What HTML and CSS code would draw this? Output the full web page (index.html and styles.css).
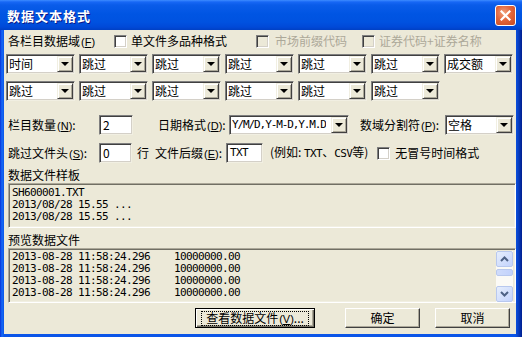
FILE: index.html
```html
<!DOCTYPE html>
<html lang="zh-CN">
<head>
    <meta charset="UTF-8">
    <title>数据文本格式</title>
    <link rel="stylesheet" href="styles.css">
</head>
<body>
    <div class="window">
        <div class="titlebar">
            <span class="title">数据文本格式</span>
            <span class="close">
                <svg width="11" height="11" viewBox="0 0 11 11"><path d="M1.5 1.5 L9.5 9.5 M9.5 1.5 L1.5 9.5" stroke="#fff" stroke-width="2.2" stroke-linecap="square"/></svg>
            </span>
        </div>

        <div class="dialog">
            <div class="row row-top">
                <span class="label t1">各栏目数据域<span class="acc">(<u>F</u>)</span></span>
                <span class="check"></span><span class="label t2">单文件多品种格式</span>
                <span class="check disabled"></span><span class="label gray t3">市场前缀代码</span>
                <span class="check disabled"></span><span class="label gray t4">证券代码+证券名称</span>
            </div>

            <div class="combo-grid">
                <div class="combo"><span class="value">时间</span><span class="drop"></span></div>
                <div class="combo"><span class="value">跳过</span><span class="drop"></span></div>
                <div class="combo"><span class="value">跳过</span><span class="drop"></span></div>
                <div class="combo"><span class="value">跳过</span><span class="drop"></span></div>
                <div class="combo"><span class="value">跳过</span><span class="drop"></span></div>
                <div class="combo"><span class="value">跳过</span><span class="drop"></span></div>
                <div class="combo"><span class="value">成交额</span><span class="drop"></span></div>
                <div class="combo"><span class="value">跳过</span><span class="drop"></span></div>
                <div class="combo"><span class="value">跳过</span><span class="drop"></span></div>
                <div class="combo"><span class="value">跳过</span><span class="drop"></span></div>
                <div class="combo"><span class="value">跳过</span><span class="drop"></span></div>
                <div class="combo"><span class="value">跳过</span><span class="drop"></span></div>
                <div class="combo"><span class="value">跳过</span><span class="drop"></span></div>
            </div>

            <div class="row row-n">
                <span class="label w-first">栏目数量<span class="acc">(<u>N</u>)</span>:</span>
                <span class="edit w-num">2</span>
                <span class="label w-mid m-date">日期格式<span class="acc">(<u>D</u>)</span>:</span>
                <div class="combo date"><span class="value mono">Y/M/D,Y-M-D,Y.M.D</span><span class="drop"></span></div>
                <span class="label w-sep">数域分割符<span class="acc">(<u>P</u>)</span>:</span>
                <div class="combo"><span class="value">空格</span><span class="drop"></span></div>
            </div>

            <div class="row row-s">
                <span class="label w-first">跳过文件头<span class="acc">(<u>S</u>)</span>:</span>
                <span class="edit w-num2">0</span>
                <span class="label m-row">行</span>
                <span class="label w-mid m-ext">文件后缀<span class="acc">(<u>E</u>)</span>:</span>
                <span class="edit mono w-ext">TXT</span>
                <span class="label m-eg">(例如: <span class="mono">TXT</span>、<span class="mono">CSV</span>等)</span>
                <span class="check c4"></span><span class="label">无冒号时间格式</span>
            </div>

            <div class="caption">数据文件样板</div>
            <div class="box sample">
                <div class="line">SH600001.TXT</div>
                <div class="line">2013/08/28 15.55 ...</div>
                <div class="line">2013/08/28 15.55 ...</div>
            </div>

            <div class="caption">预览数据文件</div>
            <div class="box preview">
                <div class="lines">
                    <div class="line">2013-08-28 11:58:24.296    10000000.00</div>
                    <div class="line">2013-08-28 11:58:24.296    10000000.00</div>
                    <div class="line">2013-08-28 11:58:24.296    10000000.00</div>
                    <div class="line">2013-08-28 11:58:24.296    10000000.00</div>
                </div>
                <div class="scrollbar">
                    <span class="sb-btn">
                        <svg width="9" height="6" viewBox="0 0 9 6"><path d="M1 5 L4.5 1.5 L8 5" fill="none" stroke="#4d6185" stroke-width="2"/></svg>
                    </span>
                    <span class="sb-thumb"></span>
                    <span class="sb-btn sb-down">
                        <svg width="9" height="6" viewBox="0 0 9 6"><path d="M1 1 L4.5 4.5 L8 1" fill="none" stroke="#4d6185" stroke-width="2"/></svg>
                    </span>
                </div>
            </div>

            <div class="buttons">
                <span class="btn default"><span class="focus">查看数据文件<span class="acc">(<u>V</u>)</span>...</span></span>
                <span class="btn b-ok">确定</span>
                <span class="btn b-cancel">取消</span>
            </div>
        </div>
    </div>
</body>
</html>
```

FILE: styles.css
```css
* {
    margin: 0;
    padding: 0;
    box-sizing: border-box;
}

body {
    width: 522px;
    height: 337px;
    overflow: hidden;
    font-family: "Noto Sans CJK SC", "Liberation Sans", sans-serif;
    font-size: 12px;
    color: #000;
    background: #0a4fe0;
}

.window {
    width: 522px;
    height: 337px;
    display: flex;
    flex-direction: column;
    background: linear-gradient(to right, #0831d9 0, #166af6 2px, #0a55e8 4px, #0a55e8 515px, #0842c8 518px, #001e8e 522px);
}

/* title bar */
.titlebar {
    height: 30px;
    flex: none;
    display: flex;
    align-items: center;
    justify-content: space-between;
    padding: 0 6px 0 7px;
    background: linear-gradient(to bottom, #3d8cff 0, #1767f5 2px, #0a5ce9 5px, #0055e3 14px, #0052e0 22px, #0049d8 27px, #0040c4 30px);
}

.title {
    color: #fff;
    font-weight: bold;
    font-size: 13px;
    letter-spacing: 1px;
    text-shadow: 1px 1px 0 #0a1c8a;
}

.close {
    width: 21px;
    height: 21px;
    display: flex;
    align-items: center;
    justify-content: center;
    border: 1px solid #fff;
    border-radius: 3px;
    background: radial-gradient(circle at 40% 35%, #f0a07c 0, #e2663c 45%, #c84a20 100%);
    margin-top: 1px;
}

/* dialog body */
.dialog {
    flex: 1;
    margin: 0 6px 3px 4px;
    background: #ece9d8;
    padding: 3px 0 0 2px;
}

.row {
    display: flex;
    align-items: center;
    white-space: nowrap;
}

.row-top {
    height: 16px;
}

.label {
    margin-left: 2px;
    line-height: 16px;
}

.t1 { width: 106px; }
.t2 { width: 125px; margin-left: 4px; }
.t3 { width: 87px; margin-left: 6px; }
.t4 { margin-left: 4px; }

.acc {
    font-family: "Liberation Sans", sans-serif;
    font-size: 11px;
    margin-left: 1px;
}

.gray {
    color: #aca899;
}

.check {
    width: 13px;
    height: 13px;
    flex: none;
    background: #fff;
    border-top: 1px solid #808080;
    border-left: 1px solid #808080;
    border-right: 1px solid #fff;
    border-bottom: 1px solid #fff;
    box-shadow: inset 1px 1px 0 #404040, inset -1px -1px 0 #d4d0c8;
}

.check.disabled {
    background: #ece9d8;
}

.c4 { margin-left: 9px; margin-right: 3px; }

/* combo boxes */
.combo-grid {
    display: grid;
    grid-template-columns: repeat(7, 69px);
    column-gap: 4px;
    row-gap: 7px;
    margin-top: 5px;
}

.combo {
    width: 69px;
    height: 20px;
    flex: none;
    display: flex;
    align-items: center;
    justify-content: space-between;
    background: #fff;
    border-top: 1px solid #7f7f7f;
    border-left: 1px solid #7f7f7f;
    border-right: 1px solid #f1efe2;
    border-bottom: 1px solid #f1efe2;
    box-shadow: inset 1px 1px 0 #404040, inset -1px -1px 0 #d4d0c8;
    padding: 1px 1px 1px 2px;
}

.value {
    line-height: 16px;
    overflow: hidden;
}

.drop {
    width: 16px;
    height: 16px;
    flex: none;
    position: relative;
    background: #ece9d8;
    border-top: 1px solid #f1efe2;
    border-left: 1px solid #f1efe2;
    border-right: 1px solid #404040;
    border-bottom: 1px solid #404040;
    box-shadow: inset 1px 1px 0 #fff, inset -1px -1px 0 #aca899;
}

.drop::after {
    content: "";
    position: absolute;
    left: 3px;
    top: 5px;
    border-left: 4px solid transparent;
    border-right: 4px solid transparent;
    border-top: 4px solid #000;
}

.mono {
    font-family: "DejaVu Sans Mono", "Liberation Mono", monospace;
    font-size: 11px;
    letter-spacing: -0.62px;
}

.combo.date {
    width: 120px;
}

.combo.date .value {
    letter-spacing: -1.1px;
}

/* edits */
.edit {
    height: 20px;
    flex: none;
    background: #fff;
    border-top: 1px solid #7f7f7f;
    border-left: 1px solid #7f7f7f;
    border-right: 1px solid #f1efe2;
    border-bottom: 1px solid #f1efe2;
    box-shadow: inset 1px 1px 0 #404040, inset -1px -1px 0 #d4d0c8;
    padding: 0 3px;
    line-height: 18px;
}

.row-n {
    margin-top: 14px;
    height: 20px;
}

.row-s {
    margin-top: 8px;
    height: 20px;
}

.w-first { width: 91px; }
.w-num { width: 34px; }
.w-num2 { width: 33px; }
.w-mid { width: 71px; }
.w-sep { width: 85px; margin-left: 11px; }
.w-ext { width: 37px; }

.m-date { margin-left: 25px; }
.m-row { margin-left: 5px; }
.m-ext { margin-left: 6px; }
.m-eg { margin-left: 7px; }

/* text boxes */
.caption {
    margin: 3px 0 0 2px;
    height: 17px;
    line-height: 17px;
}

.box {
    width: 508px;
    margin-left: 2px;
    border-top: 1px solid #aca899;
    border-left: 1px solid #aca899;
    border-right: 1px solid #fff;
    border-bottom: 1px solid #fff;
    box-shadow: inset 1px 1px 0 #716f64, inset -1px -1px 0 #f1efe2;
    padding: 2px;
}

.sample {
    height: 45px;
    padding-top: 3px;
}

.line {
    font-family: "DejaVu Sans Mono", "Liberation Mono", monospace;
    font-size: 11px;
    letter-spacing: -0.62px;
    line-height: 12px;
    height: 12px;
    white-space: pre;
    padding-left: 1px;
}

.preview {
    height: 55px;
    display: flex;
    justify-content: space-between;
    padding-top: 2px;
}

.scrollbar {
    width: 17px;
    height: 51px;
    display: flex;
    flex-direction: column;
    background: #fbfaf6;
}

.sb-btn {
    width: 17px;
    height: 16px;
    display: flex;
    align-items: center;
    justify-content: center;
    border: 1px solid #b8c8ee;
    border-radius: 2px;
    background: linear-gradient(to bottom right, #e6eefc, #c3d3fd);
}

.sb-thumb {
    width: 17px;
    height: 7px;
    margin-top: 2px;
    border: 1px solid #b8c8ee;
    border-radius: 2px;
    background: linear-gradient(to right, #d0dcfb, #c2d2fc);
}

.sb-down {
    margin-top: auto;
}

/* buttons */
.buttons {
    display: flex;
    margin-top: 5px;
    height: 20px;
}

.btn {
    height: 20px;
    display: flex;
    align-items: center;
    justify-content: center;
    background: #ece9d8;
    border-top: 1px solid #fff;
    border-left: 1px solid #fff;
    border-right: 1px solid #404040;
    border-bottom: 1px solid #404040;
    box-shadow: inset -1px -1px 0 #aca899;
    line-height: 16px;
}

.btn.default {
    width: 120px;
    margin-left: 189px;
    border: 1px solid #000;
    box-shadow: inset 1px 1px 0 #fff, inset -1px -1px 0 #716f64, inset -2px -2px 0 #aca899;
}

.focus {
    border: 1px dotted #000;
    padding: 0 4px;
    line-height: 12px;
}

.b-ok {
    width: 75px;
    margin-left: 30px;
}

.b-cancel {
    width: 75px;
    margin-left: 15px;
}
```
